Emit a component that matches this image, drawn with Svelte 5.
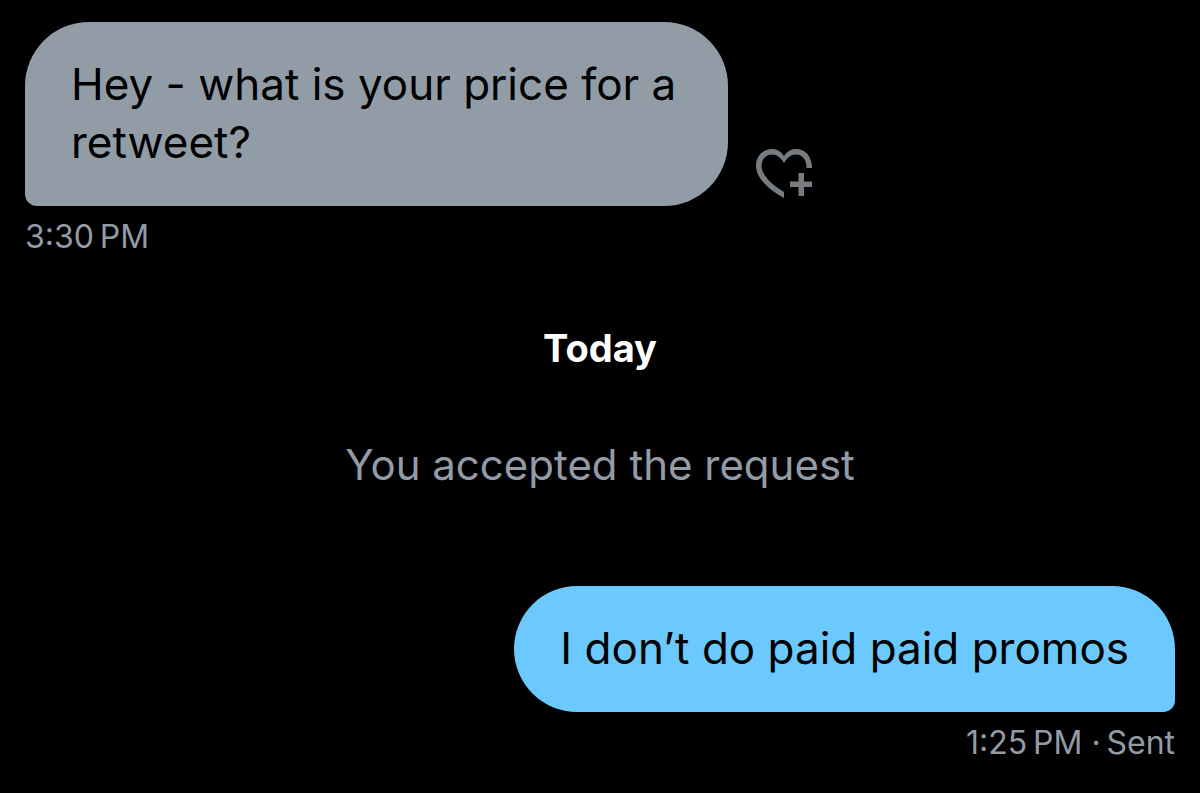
<script>
    const incoming = {
        text: 'Hey - what is your price for a retweet?',
        time: '3:30\u2009PM'
    };

    const outgoing = {
        text: 'I don’t do paid paid promos',
        time: '1:25\u2009PM',
        status: 'Sent'
    };
</script>

<main class="conversation">
    <article class="message received">
        <div class="row">
            <p class="bubble">{incoming.text}</p>
            <button class="react" aria-label="Add reaction">
                <svg viewBox="0 0 60 54" fill="currentColor">
                    <path d="M29 51C16 44 1 32 1 19C1 9 8 2 17 2C22 2 26 4.5 29 9C32 4.5 36 2 41 2C50 2 57 9 57 21H51.5C51.5 12 47 7.5 41 7.5C36 7.5 32.5 10.5 29 16C25.5 10.5 22 7.5 17 7.5C11 7.5 6.5 12.5 6.5 19C6.5 28 17 38 29 45Z" />
                    <path d="M43.5 26H49V34.5H57V40H49V49H43.5V40H35V34.5H43.5Z" />
                </svg>
            </button>
        </div>
        <time class="meta">{incoming.time}</time>
    </article>

    <h2 class="day">Today</h2>
    <p class="notice">You accepted the request</p>

    <article class="message sent">
        <p class="bubble">{outgoing.text}</p>
        <div class="meta"><time>{outgoing.time}</time> ·&thinsp;{outgoing.status}</div>
    </article>
</main>

<style>
    :global(body) {
        background: #000;
    }

    .conversation {
        padding: 22px 25px;
        font-family: Inter, "Liberation Sans", sans-serif;
        color: #939ca6;
    }

    p,
    h2 {
        margin: 0;
    }

    .message {
        display: flex;
        flex-direction: column;
        align-items: flex-start;
    }

    .row {
        display: flex;
        align-items: flex-end;
        gap: 27px;
    }

    .bubble {
        max-width: 611px;
        padding: 33px 46px 35px;
        border-radius: 64px 64px 64px 12px;
        background: #929ca6;
        color: #000;
        font-size: 44px;
        line-height: 58px;
    }

    .react {
        padding: 0;
        border: 0;
        margin-bottom: 5px;
        background: none;
        color: #777c80;
    }

    .react svg {
        display: block;
        width: 60px;
        height: 54px;
    }

    .meta {
        margin-top: 10px;
        font-size: 32px;
        line-height: 42px;
    }

    .day {
        margin-top: 65px;
        color: #fff;
        font-size: 38px;
        line-height: 50px;
        text-align: center;
    }

    .notice {
        margin: 63px 0 92px;
        font-size: 42px;
        line-height: 58px;
        text-align: center;
    }

    .sent {
        align-items: flex-end;
    }

    .sent .bubble {
        border-radius: 64px 64px 12px 64px;
        background: #6bc9fd;
    }
</style>
